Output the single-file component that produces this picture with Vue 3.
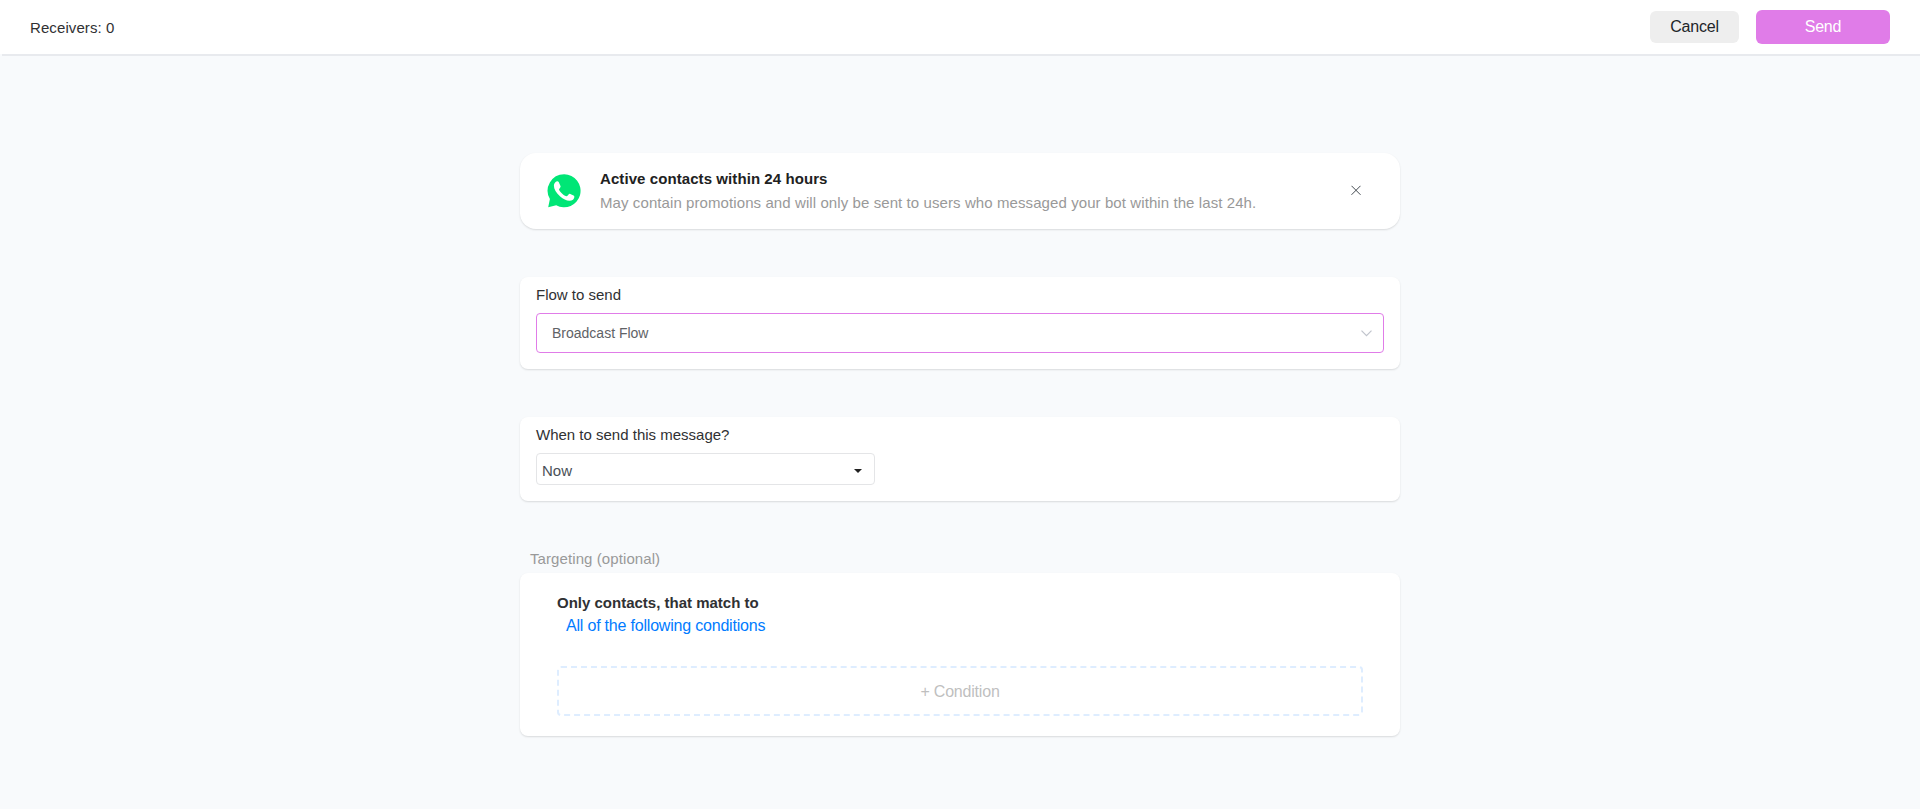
<script setup>
import { ref } from 'vue'

const receivers = ref(0)
const flow = ref('Broadcast Flow')
const sendTime = ref('Now')
</script>

<template>
  <div class="page">
    <header class="topbar">
      <div class="receivers">Receivers: {{ receivers }}</div>
      <div class="actions">
        <button class="btn cancel">Cancel</button>
        <button class="btn send">Send</button>
      </div>
    </header>

    <main class="content">
      <section class="card type-card">
        <svg class="whatsapp" viewBox="0 0 34 34">
          <path
            fill="#00e676"
            d="M17.2 0.3A16.5 16.5 0 0 0 2.9 25.1L1.2 33.2L9.2 31.3A16.5 16.5 0 1 0 17.2 0.3Z"
          />
          <path
            fill="#fff"
            d="M8.6 7.9C9.5 7.1 11.2 7.1 11.7 8L13.6 12.3C13.9 13.4 12.2 14.6 12 15.4C13.2 18.5 17 21.5 19.7 22.2C20.8 22 21.6 19.8 22.8 19.8L27 21.8C27.8 22.5 27.1 24.9 26 25.7C22.3 28.2 17.3 25.9 13.2 22.4C9.2 18.7 6.8 14.8 6.9 11.4C7 9.9 7.7 8.7 8.6 7.9Z"
          />
        </svg>
        <div class="type-text">
          <div class="type-title">Active contacts within 24 hours</div>
          <div class="type-description">
            May contain promotions and will only be sent to users who messaged your bot within the last 24h.
          </div>
        </div>
        <svg class="close" viewBox="0 0 10 10">
          <path d="M0.5 0.8L9.5 9.8M9.5 0.8L0.5 9.8" fill="none" stroke="#444b52" stroke-width="1" />
        </svg>
      </section>

      <section class="card flow-card">
        <div class="label">Flow to send</div>
        <div class="flow-select">
          <span>{{ flow }}</span>
          <svg class="chevron" viewBox="0 0 12 7">
            <path d="M0.5 0.7L5.5 5.7L10.5 0.7" fill="none" stroke="#c0c4cc" stroke-width="1.2" />
          </svg>
        </div>
      </section>

      <section class="card time-card">
        <div class="label">When to send this message?</div>
        <div class="time-select">
          <span>{{ sendTime }}</span>
          <i class="caret"></i>
        </div>
      </section>

      <div class="targeting-label">Targeting (optional)</div>
      <section class="card targeting-card">
        <div class="match-title">Only contacts, that match to</div>
        <a class="match-link">All of the following conditions</a>
        <div class="add-condition">+ Condition</div>
      </section>
    </main>
  </div>
</template>

<style>
body {
  background-color: #f8fafc;
}
</style>

<style scoped>
.page {
  min-height: 809px;
  background-color: #f8fafc;
  font-family: 'Liberation Sans', Arial, sans-serif;
  font-size: 15px;
  color: #303133;
}

.topbar {
  box-sizing: border-box;
  height: 54px;
  padding: 0 30px;
  display: flex;
  justify-content: space-between;
  align-items: center;
  background-color: #fff;
  box-shadow: 2px 2px 0 #e8eaee;
}

.receivers {
  letter-spacing: 0.09px;
}

.actions {
  display: flex;
  align-items: center;
  gap: 17px;
}

.btn {
  border: none;
  padding: 0;
  border-radius: 6px;
  font-family: inherit;
  font-size: 16px;
  letter-spacing: -0.2px;
  cursor: pointer;
}

.cancel {
  width: 89px;
  height: 32px;
  background-color: #eee;
  color: #212529;
}

.send {
  width: 134px;
  height: 34px;
  background-color: #e07ce8;
  color: #fff;
}

.content {
  width: 880px;
  margin: 0 auto;
  padding-top: 99px;
}

.card {
  box-sizing: border-box;
  background-color: #fff;
  border-radius: 8px;
  box-shadow: 0 1px 2px rgba(0, 0, 0, 0.13);
}

.type-card {
  height: 76px;
  padding: 0 39px 0 27px;
  display: flex;
  align-items: center;
  border-radius: 16px;
}

.whatsapp {
  width: 34px;
  height: 34px;
}

.type-text {
  flex: 1;
  margin-left: 19px;
}

.type-title {
  line-height: 24px;
  font-weight: bold;
  letter-spacing: 0.08px;
  color: #212121;
}

.type-description {
  line-height: 24px;
  letter-spacing: 0.088px;
  color: #999;
}

.close {
  width: 10px;
  height: 10px;
  margin-bottom: 2px;
}

.flow-card {
  height: 92px;
  margin-top: 48px;
  padding: 8px 16px;
}

.label {
  line-height: 20px;
}

.flow-select {
  box-sizing: border-box;
  height: 40px;
  margin-top: 8px;
  padding: 0 10px 0 15px;
  display: flex;
  justify-content: space-between;
  align-items: center;
  border: 1px solid #e07ce8;
  border-radius: 4px;
  font-size: 14px;
  color: #606266;
}

.chevron {
  width: 12px;
  height: 7px;
}

.time-card {
  height: 84px;
  margin-top: 48px;
  padding: 8px 16px;
}

.time-select {
  box-sizing: border-box;
  width: 339px;
  height: 32px;
  margin-top: 8px;
  padding: 3px 12px 0 5px;
  display: flex;
  justify-content: space-between;
  align-items: center;
  border: 1px solid #e4e5e7;
  border-radius: 4px;
  color: #495057;
}

.caret {
  border: 4px solid transparent;
  border-top-color: #212121;
  border-bottom: none;
}

.targeting-label {
  margin: 48px 0 4px 10px;
  line-height: 20px;
  letter-spacing: 0.09px;
  color: #999;
}

.targeting-card {
  height: 163px;
  padding: 19px 37px;
}

.match-title {
  line-height: 21px;
  font-weight: bold;
}

.match-link {
  display: block;
  margin: 1px 0 0 9px;
  line-height: 24px;
  font-size: 16px;
  letter-spacing: -0.2px;
  color: #007bff;
}

.add-condition {
  box-sizing: border-box;
  height: 50px;
  margin-top: 28px;
  padding-top: 1px;
  display: flex;
  justify-content: center;
  align-items: center;
  border: 2px dashed #deedff;
  border-radius: 4px;
  font-size: 16px;
  letter-spacing: -0.2px;
  color: #bfbfbf;
}
</style>
